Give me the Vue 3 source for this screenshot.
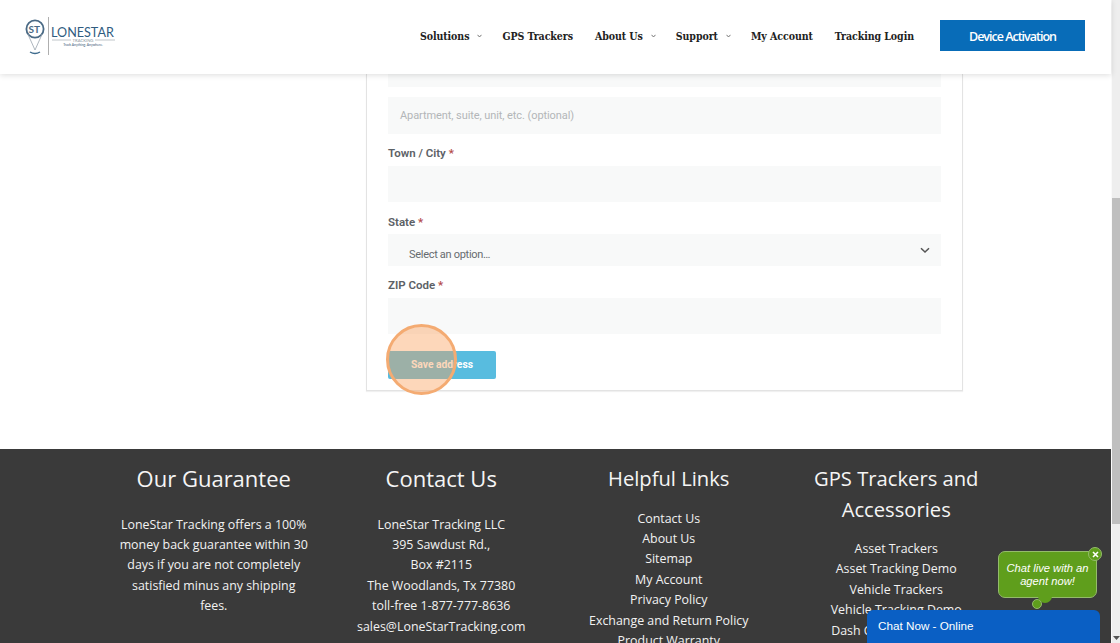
<script setup>
const nav = [
  { label: 'Solutions', caret: true },
  { label: 'GPS Trackers' },
  { label: 'About Us', caret: true },
  { label: 'Support', caret: true },
  { label: 'My Account' },
  { label: 'Tracking Login' },
]
const guarantee = ['LoneStar Tracking offers a 100% money back guarantee within 30 days if you are not completely satisfied minus any shipping fees.']
const contact = ['LoneStar Tracking LLC', '395 Sawdust Rd.,', 'Box #2115', 'The Woodlands, Tx 77380', 'toll-free 1-877-777-8636', 'sales@LoneStarTracking.com']
const helpful = ['Contact Us', 'About Us', 'Sitemap', 'My Account', 'Privacy Policy', 'Exchange and Return Policy', 'Product Warranty']
const gps = ['Asset Trackers', 'Asset Tracking Demo', 'Vehicle Trackers', 'Vehicle Tracking Demo', 'Dash Camera Trackers']
</script>

<template>
  <div class="page">
    <div class="viewport">
      <header class="header">
        <svg class="logo" width="100" height="42" viewBox="0 0 100 42">
          <circle cx="10" cy="12" r="8.6" fill="none" stroke="#4a6a85" stroke-width="1.8" />
          <path d="M2.8 17 L10 33 L17.2 17" fill="none" stroke="#9aa5ae" stroke-width="0.8" />
          <path d="M5 35 Q10 38 15 35" fill="none" stroke="#3f6c8e" stroke-width="1.4" />
          <text x="3.6" y="15.5" class="logo-st">ST</text>
          <line x1="23.5" y1="0" x2="23.5" y2="38" stroke="#9a9a9a" stroke-width="0.8" />
          <text x="26" y="19.7" class="logo-name">LONESTAR</text>
          <line x1="27" y1="23" x2="46" y2="23" stroke="#aeb6bb" stroke-width="0.8" />
          <line x1="70" y1="23" x2="90" y2="23" stroke="#aeb6bb" stroke-width="0.8" />
          <text x="58" y="24.6" class="logo-sub" text-anchor="middle">TRACKING</text>
          <text x="58" y="29.4" class="logo-tag" text-anchor="middle">Track Anything, Anywhere.</text>
        </svg>
        <nav class="nav">
          <a v-for="item in nav" :key="item.label" class="nav-item">
            <span>{{ item.label }}</span>
            <svg v-if="item.caret" class="caret" width="5" height="4" viewBox="0 0 5 4">
              <path d="M0.5 0.8 L2.5 3 L4.5 0.8" fill="none" stroke="#666" stroke-width="0.9" />
            </svg>
          </a>
        </nav>
        <a class="activate">Device Activation</a>
      </header>

      <main class="scroller">
        <section class="card">
          <div class="input cut"></div>
          <div class="input second"><span class="placeholder">Apartment, suite, unit, etc. (optional)</span></div>
          <label class="label">Town / City <i>*</i></label>
          <div class="input"></div>
          <label class="label state">State <i>*</i></label>
          <div class="input select">
            <span>Select an option…</span>
            <svg width="10" height="7" viewBox="0 0 10 7">
              <path d="M1 1.2 L5 5 L9 1.2" fill="none" stroke="#555" stroke-width="1.5" />
            </svg>
          </div>
          <label class="label">ZIP Code <i>*</i></label>
          <div class="input"></div>
          <button class="save">Save address</button>
        </section>

        <footer class="footer">
          <div class="col">
            <h3>Our Guarantee</h3>
            <p v-for="t in guarantee" :key="t">{{ t }}</p>
          </div>
          <div class="col">
            <h3>Contact Us</h3>
            <p><span v-for="t in contact" :key="t" class="line">{{ t }}</span></p>
          </div>
          <div class="col small">
            <h3>Helpful Links</h3>
            <ul><li v-for="t in helpful" :key="t">{{ t }}</li></ul>
          </div>
          <div class="col small">
            <h3>GPS Trackers and Accessories</h3>
            <ul><li v-for="t in gps" :key="t">{{ t }}</li></ul>
          </div>
        </footer>
      </main>

      <div class="click-ring"></div>

      <div class="bubble">
        <span class="close">
          <svg width="7" height="7" viewBox="0 0 7 7"><path d="M1 1 L6 6 M6 1 L1 6" stroke="#fff" stroke-width="1.6" /></svg>
        </span>
        Chat live with an agent now!
        <span class="tail"></span>
      </div>
      <span class="dot"></span>
      <div class="chat-bar">Chat Now - Online</div>
    </div>

    <aside class="scrollbar">
      <div class="track"><div class="thumb"></div></div>
      <svg class="arrow" width="7" height="4" viewBox="0 0 7 4"><path d="M0 0 H7 L3.5 4 Z" fill="#555" /></svg>
    </aside>
  </div>
</template>

<style>
html, body { margin: 0; overflow: hidden; background: #fff; }
</style>

<style scoped>
.page { display: flex; width: 1120px; height: 643px; overflow: hidden; background: #fff; }
.viewport { position: relative; flex: 1; min-width: 0; display: flex; flex-direction: column; }

.header {
  position: relative; z-index: 2; flex: none; height: 74px; box-sizing: border-box;
  display: flex; align-items: center; padding: 0 26px 3px 0; background: #fff;
  box-shadow: 0 1px 6px rgba(0, 0, 0, .14);
}
.logo { position: absolute; left: 25px; top: 17px; }
.logo-st { font: 700 10px "Lato", sans-serif; fill: #4a6a85; }
.logo-name { font: 400 12.6px "Lato", sans-serif; fill: #2f5c80; }
.logo-sub { font: 400 4.2px "Lato", sans-serif; fill: #8a98a3; }
.logo-tag { font: 400 3.4px "Lato", sans-serif; fill: #3b5a75; }

.nav { display: flex; align-items: center; gap: 22px; margin: 1px 26px 0 auto; }
.nav-item {
  display: flex; align-items: center; color: #222; white-space: nowrap; letter-spacing: -.06px;
  font-family: "DejaVu Serif", serif; font-stretch: condensed; font-weight: 700; font-size: 10.5px;
}
.caret { margin-left: 8px; margin-right: -2px; }
.activate {
  width: 145px; height: 31px; box-sizing: border-box; padding-top: 1px;
  display: flex; align-items: center; justify-content: center;
  background: #086cb8; color: #fff; font: 600 12.5px "Open Sans", sans-serif; letter-spacing: -1px;
}

.scroller { flex: 1; min-height: 0; overflow: hidden; }
.card {
  box-sizing: border-box; width: 597px; height: 317px; margin-left: 366px; padding: 0 21px;
  border: 1px solid #e3e3e3; border-top: 0; box-shadow: 0 1px 1px rgba(0, 0, 0, .06);
}
.input { height: 36px; background: #f8f9f9; }
.cut { height: 13px; }
.second { height: 37px; margin-top: 10px; display: flex; align-items: center; padding-left: 12px; }
.placeholder { font: 400 11px "Roboto", sans-serif; color: #b3b6b8; letter-spacing: -.08px; }
.label {
  display: block; height: 19px; margin: 10px 0 3px;
  font: 600 11.5px/19px "Roboto", sans-serif; color: #5c6166;
}
.label.state { margin: 11px 0 2px; }
.label i { font-style: normal; color: #b44a4a; }
.select {
  height: 32px; display: flex; align-items: center; justify-content: space-between;
  padding: 0 11px 0 21px; font: 400 11px "Roboto", sans-serif; color: #666b6f; letter-spacing: -.3px;
}
.select span { line-height: 1; padding-top: 8px; }
.select svg { margin-top: 1px; }
.save {
  display: block; width: 108px; height: 28px; margin-top: 17px; border: 0; border-radius: 2px;
  background: #58bcdf; color: #fff; font: 700 10.3px "Roboto", sans-serif; text-align: center; padding: 0 0 1px;
}

.footer {
  box-sizing: border-box; margin-top: 58px; padding: 14px 101px 0 100px; height: 260px;
  background: #3a3a3a; display: grid; grid-template-columns: repeat(4, 1fr); color: #f2f2f2;
  font: 400 12.4px/20.4px "Open Sans", sans-serif; text-align: center;
}
.col { padding: 0 15px; min-width: 0; }
.col h3 { margin: 0 0 15px; font: 400 22px/30.5px "Open Sans", sans-serif; color: #f5f5f5; }
.col.small h3 { font-size: 20.2px; }
.col p { margin: 21px 3px 0; }
.line { display: block; white-space: nowrap; }
.col ul { list-style: none; margin: 0; padding: 0; }

.click-ring {
  position: absolute; left: 386px; top: 324px; width: 65px; height: 65px; border-radius: 50%;
  border: 3px solid #f4ab72; background: rgba(250, 160, 90, .42); z-index: 3;
}

.bubble {
  position: absolute; left: 998px; top: 551px; width: 99px; height: 47px; box-sizing: border-box;
  display: flex; align-items: center; justify-content: center; text-align: center; padding: 1px 4px 0;
  background: #5f9e1c; border: 1px solid #94bb6b; border-radius: 7px; z-index: 4;
  color: #fff; font: italic 400 11.2px/13px "Liberation Sans", sans-serif;
}
.close {
  position: absolute; right: -6px; top: -5px; width: 14px; height: 14px; border-radius: 50%;
  background: #5f9e1c; border: 1px solid #94bb6b; box-sizing: border-box;
  display: flex; align-items: center; justify-content: center;
}
.tail {
  position: absolute; left: 39px; bottom: -6px; width: 14px; height: 7px; background: #5f9e1c;
  border-radius: 0 0 7px 7px;
}
.dot {
  position: absolute; left: 1032px; top: 599px; width: 10px; height: 10px; border-radius: 50%;
  box-sizing: border-box; background: #5f9e1c; border: 1px solid #94bb6b; z-index: 4;
}
.chat-bar {
  position: absolute; left: 867px; top: 610px; width: 233px; height: 33px; box-sizing: border-box;
  padding: 8px 0 0 11px; background: #0a5fc4; border-radius: 6px 6px 0 0; z-index: 4;
  color: #fff; font: 400 11.7px/16px "Liberation Sans", sans-serif;
}

.scrollbar { position: relative; flex: none; width: 8px; background: #eeeeee; border-left: 1px solid #fafafa; }
.track { height: 100%; padding-top: 198px; box-sizing: border-box; }
.thumb { height: 326px; background: #bfbfbf; }
.arrow { position: absolute; left: 1px; bottom: 3px; }
</style>
